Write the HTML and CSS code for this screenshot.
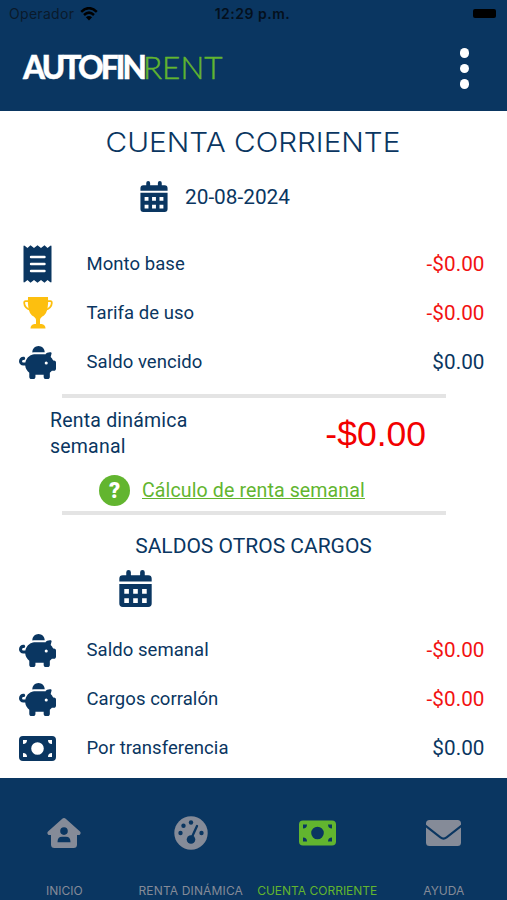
FILE: index.html
```html
<!DOCTYPE html>
<html lang="es">
<head>
<meta charset="utf-8">
<title>Autofin Rent</title>
<link rel="stylesheet" href="styles.css">
</head>
<body>
<svg class="defs" width="0" height="0">
  <symbol id="calendar" viewBox="0 0 28 32">
    <path d="M0 10V7.500Q0 4.500 3 4.500H6V2a2 2 0 0 1 4 0V4.500H18V2a2 2 0 0 1 4 0V4.500H25Q28 4.500 28 7.500V10ZM0 12H28V29Q28 32 25 32H3Q0 32 0 29ZM4.300 16.500V20.500H8.300V16.500ZM12 16.500V20.500H16V16.500ZM19.700 16.500V20.500H23.700V16.500ZM4.300 24.500V28.500H8.300V24.500ZM12 24.500V28.500H16V24.500ZM19.700 24.500V28.500H23.700V24.500Z" fill-rule="evenodd"/>
  </symbol>
  <symbol id="piggy" viewBox="0 0 576 512">
    <path d="M400 96l0 .7c-5.300-.4-10.600-.7-16-.7L256 96c-16.500 0-32.500 2.100-47.800 6c-.1-2-.2-4-.2-6c0-53 43-96 96-96s96 43 96 96zm-16 32c3.500 0 7 .1 10.400 .3c4.200 .3 8.400 .7 12.600 1.300C424.600 109.100 450.800 96 480 96l11.500 0c10.400 0 18 9.800 15.500 19.900l-13.800 55.200c15.800 14.800 28.700 32.800 37.500 52.900l13.300 0c17.700 0 32 14.300 32 32l0 96c0 17.700-14.300 32-32 32l-32 0c-9.100 12.100-19.900 22.900-32 32l0 64c0 17.700-14.300 32-32 32l-32 0c-17.700 0-32-14.300-32-32l0-32-128 0 0 32c0 17.700-14.300 32-32 32l-32 0c-17.700 0-32-14.300-32-32l0-64c-34.900-26.200-58.700-66.300-63.200-112L68 304c-37.600 0-68-30.400-68-68s30.400-68 68-68l4 0c13.300 0 24 10.700 24 24s-10.700 24-24 24l-4 0c-11 0-20 9-20 20s9 20 20 20l31.200 0c12.100-59.800 57.700-107.500 116.300-122.800c12.900-3.400 26.500-5.200 40.500-5.200l128 0zm64 136a24 24 0 1 0 -48 0 24 24 0 1 0 48 0z"/>
  </symbol>
  <symbol id="money" viewBox="0 0 37 25">
    <path d="M4 0H33Q37 0 37 4V21Q37 25 33 25H4Q0 25 0 21V4Q0 0 4 0ZM4 4V8Q8 8 8 4ZM29 4Q29 8 33 8V4ZM4 17V21H8Q8 17 4 17ZM33 17Q29 17 29 21H33ZM18.500 6.200A6.300 6.300 0 1 0 18.500 18.800A6.300 6.300 0 1 0 18.500 6.200Z" fill-rule="evenodd"/>
  </symbol>
</svg>

<div class="screen">
  <header class="header">
    <div class="status">
      <div class="carrier"><span>Operador</span>
        <svg width="18" height="14" viewBox="0 0 18 14"><path d="M1.200 4.800Q9-2.500 16.800 4.800M4 8Q9 3.300 14 8" fill="none" stroke="#000" stroke-width="2.500"/><path d="M9 13.500L5.900 10.300Q9 7.700 12.100 10.300Z"/></svg>
      </div>
      <span class="clock">12:29 p.m.</span>
      <span class="battery"></span>
    </div>
    <div class="brandbar">
      <div class="logo"><b>AUTOFIN</b><span>RENT</span></div>
      <div class="kebab"><i></i><i></i><i></i></div>
    </div>
  </header>

  <main class="main">
    <h1 class="title"><span>CUENTA CORRIENTE</span></h1>
    <div class="date"><svg width="28" height="31"><use href="#calendar"/></svg><span>20-08-2024</span></div>

    <ul class="rows">
      <li><svg class="receipt" width="29" height="38" viewBox="0 0 29 38"><path d="M.5 1.500Q.5 0 2 1L4.500 3L7.500.3L11 3L14.500.3L18 3L21.500.3L24.500 3L27 1Q28.500 0 28.500 1.500V36.500Q28.500 38 27 37L24.500 35L21.500 37.700L18 35L14.500 37.700L11 35L7.500 37.700L4.500 35L2 37Q.5 38 .5 36.500Z"/><path d="M8 12H21.500M8 19H21.500M8 26H21.500" stroke="#fff" stroke-width="2.400" stroke-linecap="round"/></svg><span class="label">Monto base</span><span class="amount neg">-$0.00</span></li>
      <li><svg class="trophy" width="30" height="32" viewBox="0 0 30 32"><path d="M5 0H25Q26 14 21 18.500Q17 20.500 17 23V27H18.500Q22.500 27.500 22.500 31.500H7.500Q7.500 27.500 11.500 27H13V23Q13 20.500 9 18.500Q4 14 5 0Z"/><path d="M5 4.200H2.500Q1.200 4.200 1.200 6Q1.500 11 7.500 13M25 4.200H27.500Q28.800 4.200 28.800 6Q28.500 11 22.500 13" fill="none" stroke="#fdbf0f" stroke-width="1.800"/></svg><span class="label">Tarifa de uso</span><span class="amount neg">-$0.00</span></li>
      <li><svg width="37" height="33"><use href="#piggy"/></svg><span class="label">Saldo vencido</span><span class="amount">$0.00</span></li>
    </ul>

    <section class="weekly">
      <div class="summary"><p>Renta dinámica<br>semanal</p><strong>-$0.00</strong></div>
      <div class="calc"><span class="help">?</span><a>Cálculo de renta semanal</a></div>
    </section>

    <h2 class="subtitle">SALDOS OTROS CARGOS</h2>
    <svg class="cal2" width="33" height="37"><use href="#calendar"/></svg>

    <ul class="rows">
      <li><svg width="37" height="33"><use href="#piggy"/></svg><span class="label">Saldo semanal</span><span class="amount neg">-$0.00</span></li>
      <li><svg width="37" height="33"><use href="#piggy"/></svg><span class="label">Cargos corralón</span><span class="amount neg">-$0.00</span></li>
      <li><svg width="37" height="25"><use href="#money"/></svg><span class="label">Por transferencia</span><span class="amount">$0.00</span></li>
    </ul>
  </main>

  <nav class="nav">
    <div class="tab"><svg width="34" height="31" viewBox="0 0 34 31"><path d="M17 .5Q18 .5 19 1.500L33 14Q34.500 16 32.500 17.500H30V27Q30 30.500 26.500 30.500H7.500Q4 30.500 4 27V17.500H1.500Q-.5 16 1 14L15 1.500Q16 .5 17 .5ZM17 9.800A3.800 3.800 0 1 0 17 17.400A3.800 3.800 0 1 0 17 9.800ZM10.500 24.700H23.500Q23.500 19.300 19 19.300H15Q10.500 19.300 10.500 24.700Z" fill-rule="evenodd"/></svg><span>INICIO</span></div>
    <div class="tab wide"><svg width="34" height="34" viewBox="0 0 34 34"><circle cx="17" cy="17" r="16.700"/><g fill="#0a3661"><circle cx="17" cy="6.500" r="2.200"/><circle cx="9.500" cy="9.800" r="2.200"/><circle cx="6.500" cy="17" r="2.200"/><circle cx="27.500" cy="17" r="2.200"/><circle cx="17" cy="23.500" r="4.300"/></g><path d="M17.500 22L23 10" stroke="#0a3661" stroke-width="2.300" stroke-linecap="round"/></svg><span>RENTA DINÁMICA</span></div>
    <div class="tab active"><svg width="37" height="25"><use href="#money"/></svg><span>CUENTA CORRIENTE</span></div>
    <div class="tab"><svg width="35" height="26" viewBox="0 0 35 26"><path d="M3.500 0H31.500Q35 0 35 3.500V4.800L20 16.500Q17.500 18.300 15 16.500L0 4.800V3.500Q0 0 3.500 0ZM0 7.500L13.800 18.300Q17.500 21 21.200 18.300L35 7.500V22.500Q35 26 31.500 26H3.500Q0 26 0 22.500Z"/></svg><span>AYUDA</span></div>
  </nav>
</div>
</body>
</html>
```
FILE: styles.css
```css
* { box-sizing: border-box; margin: 0; padding: 0; }
body { width: 507px; height: 900px; overflow: hidden; background: #fff; color: #0a3661; font-family: Roboto, "Liberation Sans", sans-serif; }
svg { display: block; fill: currentColor; flex: none; }
.defs { position: absolute; }
.screen { display: flex; flex-direction: column; height: 900px; }
.header { height: 110.5px; background: #0a3661; flex: none; }
.status { display: grid; grid-template-columns: 1fr auto 1fr; align-items: center; height: 27px; padding: 0 11px 0 9px; color: #000; font: 14px/27px Inter, sans-serif; }
.carrier { display: flex; gap: 6px; align-items: center; color: #0a1a2b; letter-spacing: .3px; }
.carrier svg { color: #000; }
.clock { font-weight: 600; letter-spacing: .5px; color: #04101d; }
.battery { width: 23px; height: 9px; border-radius: 2px; background: #000; justify-self: end; }
.brandbar { display: flex; justify-content: space-between; align-items: center; height: 83px; padding: 0 38px 0 23px; }
.logo { display: flex; font: 31.5px/40px Lato, sans-serif; white-space: nowrap; color: #fff; margin-top: -3px; }
.logo b { font-weight: 900; letter-spacing: -2.8px; width: 120px; -webkit-text-stroke: .4px #fff; }
.logo span { color: #62b52f; font-weight: 300; -webkit-text-stroke: .5px #62b52f; }
.kebab { display: flex; flex-direction: column; gap: 6px; }
.kebab i { width: 9.500px; height: 9.500px; border-radius: 50%; background: #fff; }
.main { flex: none; height: 667px; }
.title { height: 62px; text-align: center; font: 300 27px/63px Inter, sans-serif; }
.title span { display: inline-block; transform: scaleX(1.1); }
.date { display: flex; align-items: center; gap: 17px; height: 48px; padding-left: 140px; font-size: 20.800px; }
.date + .rows { padding-top: 19px; }
.rows { list-style: none; }
.rows li { display: grid; grid-template-columns: 37px 1fr auto; column-gap: 30.500px; align-items: center; height: 49px; padding: 0 22.500px 0 19px; }
.rows svg { justify-self: center; }
.rows .trophy { color: #fdbf0f; }
.label { font-size: 18.500px; letter-spacing: .05px; }
.amount { font-size: 20.700px; letter-spacing: .05px; }
.neg { color: #f21212; }
.weekly { margin: 7px 61px 0 62px; height: 121px; border-top: 4px solid #e4e4e4; border-bottom: 4px solid #e4e4e4; }
.summary { display: flex; justify-content: space-between; align-items: center; height: 72px; margin-left: -12px; padding: 0 20px 0 0; }
.summary p { font-size: 19.500px; line-height: 26px; letter-spacing: .2px; padding-top: 1px; }
.summary strong { font: 35.500px/50px "Liberation Sans", sans-serif; color: #f20000; }
.calc { display: flex; align-items: center; gap: 12px; height: 41px; padding-left: 37px; color: #62b52f; }
.help { width: 31px; height: 31px; border-radius: 50%; background: #62b52f; color: #fff; text-align: center; font: 900 22px/31px Roboto, sans-serif; }
.calc a { font-size: 19.600px; letter-spacing: .1px; text-decoration: underline; padding-top: 1px; }
.subtitle { height: 55px; padding-top: 6px; font-size: 21px; font-weight: 400; line-height: 50px; text-align: center; }
.cal2 { margin: 0 0 19px 119px; }
.nav { display: flex; flex: 1; background: #0a3661; color: #858b98; padding-left: 1px; }
.tab { width: 126.500px; flex: none; display: flex; flex-direction: column; align-items: center; padding-top: 33px; white-space: nowrap; font: 12px/16px Inter, sans-serif; }
.tab svg { height: 44px; }
.tab span { margin-top: 28px; }
.wide { letter-spacing: .15px; }
.active { color: #62b52f; }
```
